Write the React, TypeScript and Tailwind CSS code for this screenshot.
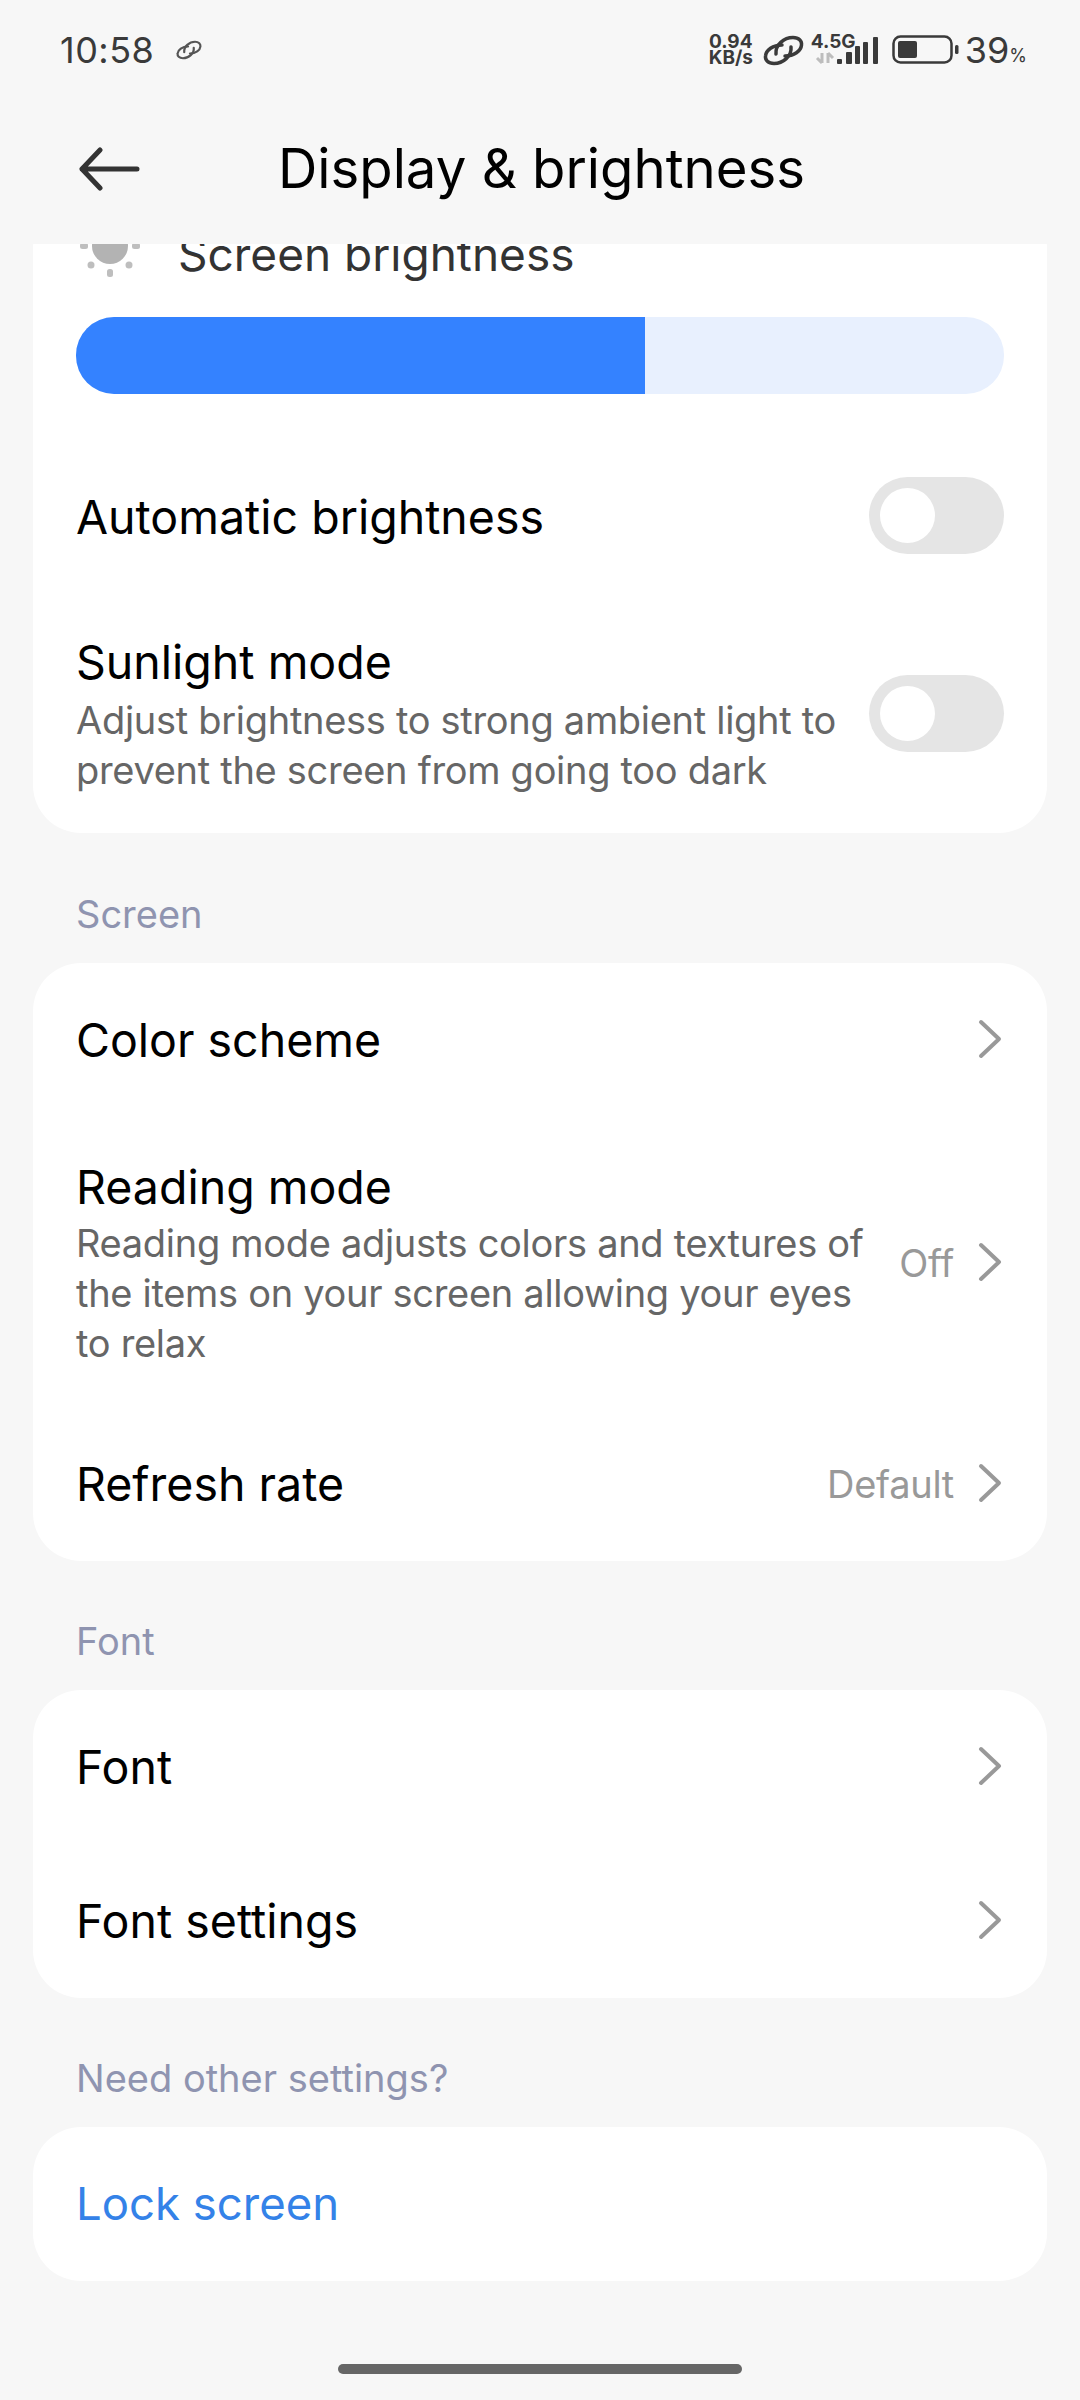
import React from "react";

const font = "font-['Inter','Roboto',sans-serif]";

const LinkIcon = ({ className, width = 3.5 }: { className: string; width?: number }) => (
    <svg viewBox="0 0 41 31" className={className} fill="none" stroke="currentColor" strokeWidth={width} strokeLinecap="round">
        <path d="M13 19 C12 10 21 2.5 30 2.5 C36 2.5 39 6 38.5 10 C38 16 31 21 22 21" />
        <path d="M28 12 C29 21 20 28.5 11 28.5 C5 28.5 2 25 2.5 21 C3 15 10 10 19 10" />
    </svg>
);

const Chevron = () => (
    <svg viewBox="0 0 24 40" className="w-[24px] h-[40px] shrink-0 mr-[2px] mb-[2px]" fill="none" stroke="#999999" strokeWidth="4" strokeLinecap="round" strokeLinejoin="round">
        <path d="M3 3 L21 20 L3 37" />
    </svg>
);

const Toggle = () => (
    <div className="w-[135px] h-[77px] rounded-full bg-[#e5e5e5] flex items-center pl-[11px] shrink-0 mb-[4px]">
        <div className="w-[55px] h-[55px] rounded-full bg-white" />
    </div>
);

const Title = ({ children }: { children: React.ReactNode }) => (
    <div className="text-[46.5px] leading-[54px] text-black">{children}</div>
);

const Desc = ({ children }: { children: React.ReactNode }) => (
    <div className="text-[38px] leading-[50px] text-[#666666] tracking-[-0.3px]">{children}</div>
);

const Value = ({ children }: { children: React.ReactNode }) => (
    <span className="text-[38px] text-[#999999] mr-[24px] tracking-[-0.3px]">{children}</span>
);

const LinkRow = ({ label, value }: { label: string; value?: string }) => (
    <div className="h-[154px] px-[43px] flex items-center justify-between">
        <Title>{label}</Title>
        <div className="flex items-center">
            {value && <Value>{value}</Value>}
            <Chevron />
        </div>
    </div>
);

const SectionLabel = ({ children, className }: { children: React.ReactNode; className: string }) => (
    <div className={`px-[43px] text-[38px] leading-[50px] text-[#8f94b0] ${className}`}>{children}</div>
);

const Card = ({ children, className = "" }: { children: React.ReactNode; className?: string }) => (
    <div className={`bg-white rounded-[48px] ${className}`}>{children}</div>
);

const StatusBar = () => (
    <div className="h-[100px] flex items-center justify-between pl-[60px] pr-[53px] text-[#3a3a3a]">
        <div className="flex items-center">
            <span className="text-[36px] tracking-[0.5px]">10:58</span>
            <LinkIcon className="w-[26px] h-[20px] ml-[22px] text-[#555555]" />
        </div>
        <div className="flex items-center">
            <div className="text-[19px] leading-[16px] font-bold text-center w-[44px]">
                <div>0.94</div>
                <div>KB/s</div>
            </div>
            <LinkIcon className="w-[41px] h-[31px] ml-[10px]" />
            {/* network type sits over the signal bars */}
            <div className="relative w-[66px] h-[30px] ml-[8px]">
                <svg viewBox="0 0 66 30" className="w-[66px] h-[30px]">
                    <path d="M10 18v10M10 28l-5-5M16 28V18M16 18l5 5" stroke="#bdbdbd" strokeWidth="3" fill="none" />
                    <rect x="25" y="24" width="5" height="5" rx="1" fill="#3a3a3a" />
                    <rect x="34" y="17" width="6" height="12" rx="1" fill="#3a3a3a" />
                    <rect x="43" y="11" width="5" height="18" rx="1" fill="#3a3a3a" />
                    <rect x="51" y="7" width="5" height="22" rx="1" fill="#3a3a3a" />
                    <rect x="61" y="2" width="5" height="27" rx="1" fill="#3a3a3a" />
                </svg>
                <span className="absolute -left-[1px] -top-[2px] text-[19px] leading-[18px] font-bold">4.5G</span>
            </div>
            <svg viewBox="0 0 68 30" className="w-[68px] h-[30px] ml-[14px]">
                <rect x="1.5" y="1.5" width="58" height="26" rx="7" fill="none" stroke="#3a3a3a" strokeWidth="2.5" />
                <rect x="6" y="6" width="19" height="17" rx="2" fill="#3a3a3a" />
                <rect x="63" y="10" width="3.5" height="9" rx="1.5" fill="#3a3a3a" />
            </svg>
            <span className="text-[36px] ml-[5px] leading-none">39</span>
            <span className="text-[18px] leading-none self-end mb-[3px]">%</span>
        </div>
    </div>
);

const SunIcon = () => (
    <svg viewBox="0 0 64 64" className="w-[64px] h-[64px] shrink-0" fill="#b3b3b3">
        <circle cx="32" cy="24" r="18" />
        <rect x="2" y="21" width="8" height="6" rx="2.5" opacity="0.85" />
        <rect x="54" y="21" width="8" height="6" rx="2.5" opacity="0.85" />
        <rect x="29" y="47" width="6" height="8" rx="2.5" opacity="0.85" />
        <circle cx="13" cy="43" r="3.5" opacity="0.85" />
        <circle cx="51" cy="43" r="3.5" opacity="0.85" />
    </svg>
);

export default function App() {
    return (
        <div className={`w-[1080px] h-[2400px] bg-[#f7f7f7] overflow-hidden flex flex-col ${font}`}>
            <StatusBar />
            {/* Header */}
            <div className="h-[144px] flex items-center pl-[78px] pb-[9px] shrink-0">
                <svg viewBox="0 0 64 44" className="w-[64px] h-[44px] shrink-0 mt-[3px]" fill="none" stroke="#333333" strokeWidth="5" strokeLinecap="round" strokeLinejoin="round">
                    <path d="M59 22 H4 M22 3 L4 22 L22 41" />
                </svg>
                <div className="ml-[136px] text-[54.5px] leading-[64px] text-black">Display &amp; brightness</div>
            </div>
            {/* Scrolled content */}
            <div className="flex-1 overflow-hidden px-[33px]">
                <Card className="-mt-[44px] pt-[27px]">
                    <div className="flex items-center h-[54px] pl-[45px]">
                        <SunIcon />
                        <div className="ml-[36px] text-[46px] leading-[54px] text-[#333333]">Screen brightness</div>
                    </div>
                    <div className="mx-[43px] mt-[36px] h-[77px] rounded-[38px] overflow-hidden bg-[#e8f0fe]">
                        <div className="h-full w-[569px] bg-[#3482ff]" />
                    </div>
                    <div className="mt-[46px] h-[154px] px-[43px] flex items-center justify-between">
                        <Title>Automatic brightness</Title>
                        <Toggle />
                    </div>
                    <div className="px-[43px] pt-[41px] pb-[38px] flex items-center justify-between">
                        <div>
                            <Title>Sunlight mode</Title>
                            <div className="mt-[6px] w-[790px]">
                                <Desc>Adjust brightness to strong ambient light to prevent the screen from going too dark</Desc>
                            </div>
                        </div>
                        <Toggle />
                    </div>
                </Card>

                <SectionLabel className="mt-[56px] mb-[24px]">Screen</SectionLabel>
                <Card>
                    <LinkRow label="Color scheme" />
                    <div className="px-[43px] pt-[43px] pb-[39px] flex items-center justify-between">
                        <div className="w-[790px]">
                            <Title>Reading mode</Title>
                            <div className="mt-[4px]">
                                <Desc>Reading mode adjusts colors and textures of the items on your screen allowing your eyes to relax</Desc>
                            </div>
                        </div>
                        <div className="flex items-center mb-[2px]">
                            <Value>Off</Value>
                            <Chevron />
                        </div>
                    </div>
                    <LinkRow label="Refresh rate" value="Default" />
                </Card>

                <SectionLabel className="mt-[55px] mb-[24px]">Font</SectionLabel>
                <Card>
                    <LinkRow label="Font" />
                    <LinkRow label="Font settings" />
                </Card>

                <SectionLabel className="mt-[55px] mb-[24px]">Need other settings?</SectionLabel>
                <Card>
                    <div className="h-[154px] px-[43px] flex items-center">
                        <div className="text-[45.5px] text-[#3482e8]">Lock screen</div>
                    </div>
                </Card>
            </div>
            {/* Home bar */}
            <div className="h-[36px] shrink-0 flex justify-center">
                <div className="w-[404px] h-[10px] rounded-full bg-[#666666]" />
            </div>
        </div>
    );
}
